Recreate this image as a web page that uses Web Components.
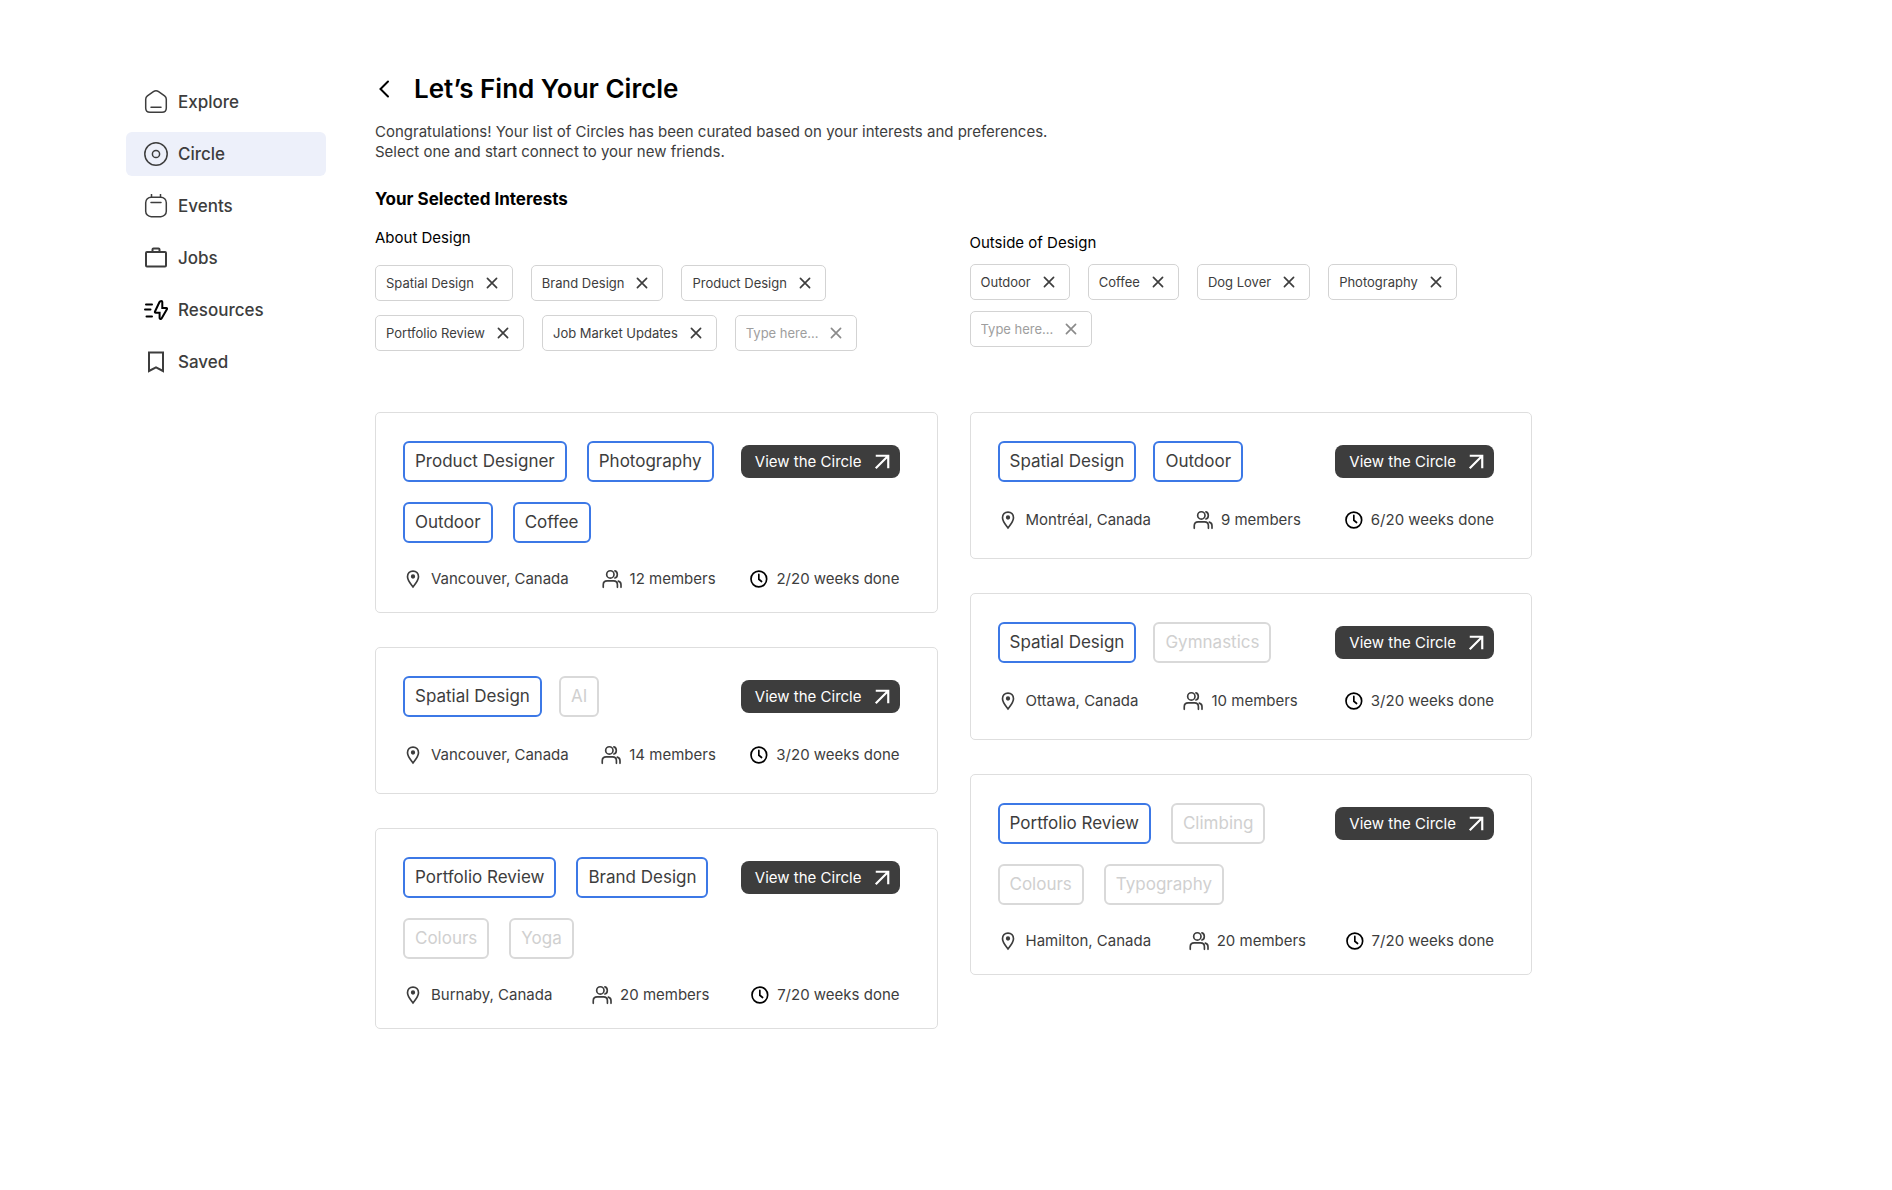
<!DOCTYPE html>
<html lang="en">
<head>
<meta charset="utf-8">
<meta name="viewport" content="width=device-width, initial-scale=1">
<title>Let’s Find Your Circle</title>
<style>
  body {
    margin: 0;
    background: #fff;
    color: #3d3d3d;
    font-family: Inter, "Liberation Sans", sans-serif;
  }
</style>
</head>
<body>
<circle-page>
  <side-nav slot="nav">
    <nav-item icon="home">Explore</nav-item>
    <nav-item icon="circle" active>Circle</nav-item>
    <nav-item icon="calendar">Events</nav-item>
    <nav-item icon="briefcase">Jobs</nav-item>
    <nav-item icon="bolt">Resources</nav-item>
    <nav-item icon="bookmark">Saved</nav-item>
  </side-nav>

  <page-intro>
    <span slot="title">Let’s Find Your Circle</span>
    Congratulations! Your list of Circles has been curated based on your interests and preferences.<br>
    Select one and start connect to your new friends.
  </page-intro>

  <interest-group slot="left" label="About Design">
    <interest-chip>Spatial Design</interest-chip>
    <interest-chip>Brand Design</interest-chip>
    <interest-chip>Product Design</interest-chip>
    <interest-chip>Portfolio Review</interest-chip>
    <interest-chip>Job Market Updates</interest-chip>
    <interest-chip editable></interest-chip>
  </interest-group>
  <interest-group slot="right" label="Outside of Design" compact>
    <interest-chip>Outdoor</interest-chip>
    <interest-chip>Coffee</interest-chip>
    <interest-chip>Dog Lover</interest-chip>
    <interest-chip>Photography</interest-chip>
    <interest-chip editable></interest-chip>
  </interest-group>

  <circle-card slot="left-cards" place="Vancouver, Canada" members="12" week="2" tall>
    <topic-tag match>Product Designer</topic-tag>
    <topic-tag match>Photography</topic-tag>
    <topic-tag match slot="more">Outdoor</topic-tag>
    <topic-tag match slot="more">Coffee</topic-tag>
  </circle-card>
  <circle-card slot="left-cards" place="Vancouver, Canada" members="14" week="3">
    <topic-tag match>Spatial Design</topic-tag>
    <topic-tag>AI</topic-tag>
  </circle-card>
  <circle-card slot="left-cards" place="Burnaby, Canada" members="20" week="7" tall>
    <topic-tag match>Portfolio Review</topic-tag>
    <topic-tag match>Brand Design</topic-tag>
    <topic-tag slot="more">Colours</topic-tag>
    <topic-tag slot="more">Yoga</topic-tag>
  </circle-card>

  <circle-card slot="right-cards" place="Montréal, Canada" members="9" week="6">
    <topic-tag match>Spatial Design</topic-tag>
    <topic-tag match>Outdoor</topic-tag>
  </circle-card>
  <circle-card slot="right-cards" place="Ottawa, Canada" members="10" week="3">
    <topic-tag match>Spatial Design</topic-tag>
    <topic-tag>Gymnastics</topic-tag>
  </circle-card>
  <circle-card slot="right-cards" place="Hamilton, Canada" members="20" week="7" tall>
    <topic-tag match>Portfolio Review</topic-tag>
    <topic-tag>Climbing</topic-tag>
    <topic-tag slot="more">Colours</topic-tag>
    <topic-tag slot="more">Typography</topic-tag>
  </circle-card>
</circle-page>

<script>
const ICONS = {
  home: '<path d="M1.700 9.300c0-1.500.5-2.500 1.700-3.400l6-4.200c1.600-1.100 3.600-1.100 5.200 0l6 4.200c1.200.9 1.700 1.900 1.700 3.400v8.700c0 2.600-1.800 4.300-4.300 4.300H6c-2.500 0-4.300-1.700-4.300-4.300z"/><path d="M7 17.200h10"/>',
  circle: '<circle cx="12" cy="12" r="11.200"/><circle cx="12" cy="12" r="3.600"/>',
  calendar: '<rect x="1.700" y="3.200" width="20.600" height="19.500" rx="5.500"/><path d="M7.500.3v2.900M16.500.3v2.900M7 8.600h10"/>',
  briefcase: '<rect x="2" y="6" width="20" height="14.500" rx="1"/><path d="M8.500 6V3.500q0-1 1-1h5q1 0 1 1V6"/>',
  bolt: '<path d="M2 6.500h6M1 11.500h5.500M2.500 18.500h5.500"/><path d="M17.300 3q1 0 1 1v6h4q1.200.1.600 1.200l-5.200 9q-.7 1.200-1.600.7-.6-.3-.5-1.200v-5h-3.800q-1.300-.1-.8-1.200l4.500-9.500q.5-1 1.800-1z"/>',
  bookmark: '<path d="M5 2.500h14v18.500l-7-3.600-7 3.600z"/>',
  back: '<path d="M13 4.500l-7.500 7.500 7.500 7.500"/>',
  close: '<path d="M6.500 6.500l11 11M17.500 6.500l-11 11"/>',
  arrow: '<path d="M4.500 4.500h15v15M19.500 4.500l-15 15"/>',
  pin: '<path d="M12 2.500c3.900 0 6.600 2.900 6.600 6.700 0 4.400-3.600 8.300-6.600 12.300-3-4-6.600-7.900-6.600-12.300 0-3.800 2.700-6.700 6.600-6.700z"/><circle cx="12" cy="9" r="1.600" fill="currentColor"/>',
  users: '<circle cx="10" cy="6.500" r="4.400"/><path d="M1.500 22v-3.200c0-2.700 2-4.600 4.700-4.600h7.600c2.700 0 4.700 1.900 4.700 4.600V22M15.500 2.200c3.800 1 3.800 7.600 0 8.600M19.600 14.500c2 .6 3.200 2.200 3.200 4.300V22"/>',
  clock: '<circle cx="13" cy="12" r="9.400"/><path d="M13 6.500v5.800l3.300 2.700"/>'
};

const define = (name, css, html, setup) => {
  const template = document.createElement('template');
  template.innerHTML = `<style>${css}</style>${html}`;

  customElements.define(name, class extends HTMLElement {
    constructor() {
      super();
      this.attachShadow({ mode: 'open' }).append(template.content.cloneNode(true));
    }

    connectedCallback() {
      if (setup) setup(this, (selector) => this.shadowRoot.querySelector(selector));
    }
  });
};

define('ui-icon', `
  :host { display: block; flex: none; width: 24px; height: 24px; }
  svg {
    display: block;
    width: 100%;
    height: 100%;
    fill: none;
    stroke: currentColor;
    stroke-width: var(--stroke, 1.5);
    stroke-linecap: var(--cap, round);
  }
`, '<svg viewBox="0 0 24 24" aria-hidden="true"></svg>', (host, $) => {
  $('svg').innerHTML = ICONS[host.getAttribute('name')] || '';
});

define('circle-page', `
  :host {
    display: flex;
    align-items: flex-start;
    gap: 49px;
    padding: 73px 126px 96px;
  }
  main { flex: 1; min-width: 0; max-width: 1157px; }
  .columns {
    display: grid;
    grid-template-columns: 1fr 1fr;
    gap: 32px;
    align-items: start;
  }
  .interests { min-height: 184px; }
  .stack { display: grid; gap: 34px; }
`, `
  <slot name="nav"></slot>
  <main>
    <slot></slot>
    <div class="columns interests">
      <slot name="left"></slot>
      <slot name="right"></slot>
    </div>
    <div class="columns">
      <div class="stack"><slot name="left-cards"></slot></div>
      <div class="stack"><slot name="right-cards"></slot></div>
    </div>
  </main>
`);

define('side-nav', `
  :host { display: block; flex: none; width: 200px; padding-top: 7px; }
  nav { display: grid; gap: 8px; }
`, '<nav><slot></slot></nav>');

define('nav-item', `
  :host { display: block; }
  a {
    display: flex;
    align-items: center;
    gap: 10px;
    height: 44px;
    padding: 0 18px;
    border-radius: 6px;
    color: #3d3d3d;
    font-size: 17px;
    font-weight: 500;
    text-decoration: none;
  }
  :host([active]) a { background: #edf0fa; }
  :host([icon="briefcase"]), :host([icon="bookmark"]) { --stroke: 2; --cap: butt; }
  :host([icon="bolt"]) ui-icon { color: #000; --stroke: 2; }
`, '<a href="#"><slot></slot></a>', (host, $) => {
  const icon = document.createElement('ui-icon');
  icon.setAttribute('name', host.getAttribute('icon'));
  $('a').prepend(icon);
  if (host.hasAttribute('active')) $('a').setAttribute('aria-current', 'page');
});

define('page-intro', `
  :host { display: block; }
  header { display: flex; align-items: center; gap: 15px; height: 32px; }
  button { padding: 0; border: 0; background: none; color: #000; --stroke: 2; }
  h1 { margin: 0; color: #000; font-size: 26px; line-height: 32px; font-weight: 600; }
  p { margin: 17px 0 27px; font-size: 15px; line-height: 20px; }
  h2 { margin: 0 0 19px; color: #000; font-size: 17px; line-height: 20px; font-weight: 700; }
`, `
  <header>
    <button type="button" aria-label="Back"><ui-icon name="back"></ui-icon></button>
    <h1><slot name="title"></slot></h1>
  </header>
  <p><slot></slot></p>
  <h2>Your Selected Interests</h2>
`);

define('interest-group', `
  :host { display: block; }
  h3 { margin: 0 0 17px; color: #000; font-size: 15px; line-height: 20px; font-weight: 400; }
  div { display: flex; flex-wrap: wrap; gap: 14px 18px; }
  :host([compact]) { padding-top: 5px; }
  :host([compact]) h3 { margin-bottom: 11px; }
  :host([compact]) div { row-gap: 11px; }
`, '<h3></h3><div><slot></slot></div>', (host, $) => {
  $('h3').textContent = host.getAttribute('label');
});

define('interest-chip', `
  :host {
    display: flex;
    align-items: center;
    gap: 8px;
    box-sizing: border-box;
    height: 36px;
    padding: 0 10px;
    border: 1px solid #d3d3d3;
    border-radius: 5px;
    font-size: 13px;
    line-height: 20px;
  }
  button { padding: 0; border: 0; background: none; color: inherit; --stroke: 2; }
  ui-icon { width: 20px; height: 20px; }
  input {
    width: 72px;
    padding: 0;
    border: 0;
    outline: 0;
    background: none;
    color: #3d3d3d;
    font: inherit;
  }
  input::placeholder { color: #9e9e9e; opacity: 1; }
  :host([editable]) { color: #8a8a8a; }
`, '<slot></slot><button type="button" aria-label="Remove"><ui-icon name="close"></ui-icon></button>', (host, $) => {
  if (!host.hasAttribute('editable')) return;
  const input = document.createElement('input');
  input.placeholder = 'Type here...';
  input.setAttribute('aria-label', 'Add an interest');
  $('slot').replaceWith(input);
});

define('topic-tag', `
  :host {
    display: block;
    box-sizing: border-box;
    height: 41px;
    padding: 0 10px;
    border: 2px solid #d9d9d9;
    border-radius: 6px;
    color: #d0d0d0;
    font-size: 17px;
    line-height: 37px;
    white-space: nowrap;
  }
  :host([match]) { border-color: #3c78e6; color: #3d3d3d; }
`, '<slot></slot>');

define('circle-card', `
  :host {
    display: block;
    padding: 28px 37px 28px 27px;
    border: 1px solid #dedede;
    border-radius: 5px;
  }
  .top { display: flex; align-items: center; justify-content: space-between; }
  .tags { display: flex; gap: 17px; }
  .more { display: none; margin-top: 20px; }
  .view {
    display: flex;
    align-items: center;
    gap: 10px;
    height: 33px;
    padding: 0 8px 0 14px;
    border: 0;
    border-radius: 8px;
    background: #3d3d3d;
    color: #fff;
    font: inherit;
    font-size: 15px;
    white-space: nowrap;
    --stroke: 2.6;
    --cap: butt;
  }
  .view ui-icon { width: 20px; height: 20px; }
  ul {
    display: flex;
    justify-content: space-between;
    margin: 28px 0 0;
    padding: 0;
    list-style: none;
    font-size: 15px;
    line-height: 20px;
  }
  li { display: flex; align-items: center; gap: 8px; }
  li ui-icon { width: 20px; height: 20px; --stroke: 2; }
  .time ui-icon { color: #000; }
  :host([tall]) { padding-bottom: 23px; }
  :host([tall]) .tags { gap: 20px; }
  :host([tall]) .more { display: flex; }
  :host([tall]) ul { margin-top: 26px; }
`, `
  <div class="top">
    <div class="tags"><slot></slot></div>
    <button class="view" type="button">View the Circle <ui-icon name="arrow"></ui-icon></button>
  </div>
  <div class="tags more"><slot name="more"></slot></div>
  <ul>
    <li><ui-icon name="pin"></ui-icon><span class="place"></span></li>
    <li><ui-icon name="users"></ui-icon><span class="members"></span></li>
    <li class="time"><ui-icon name="clock"></ui-icon><span class="weeks"></span></li>
  </ul>
`, (host, $) => {
  $('.place').textContent = host.getAttribute('place');
  $('.members').textContent = `${host.getAttribute('members')} members`;
  $('.weeks').textContent = `${host.getAttribute('week')}/20 weeks done`;
});
</script>
</body>
</html>
